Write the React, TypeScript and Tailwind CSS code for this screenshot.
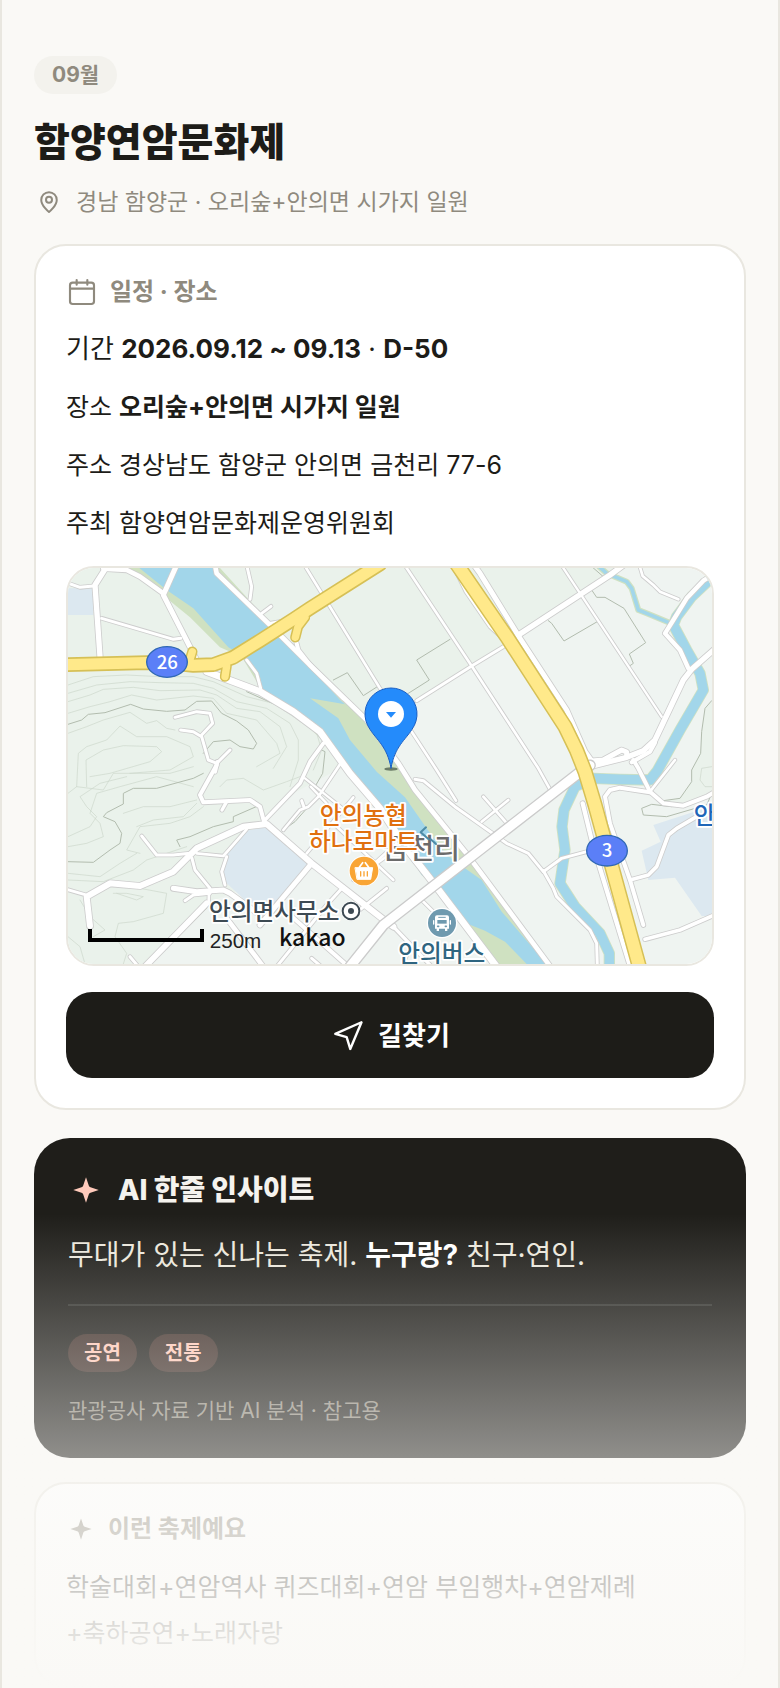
import React from "react";

type Road = [string, number];

const ROADS: Road[] = [
  ["140,20 105,75 120,290", 16],
  ["130,26 200,30 240,50 310,100", 14],
  ["350,15 310,105 392,265 410,300", 15],
  ["20,68 60,82 100,78", 9],
  ["125,175 340,238 362,235", 9],
  ["440,335 600,395 700,455 780,515 870,640 960,745 1035,860 1125,975 1310,1220", 20],
  ["465,15 470,40 630,195 760,325 920,480 1015,610 1065,690 1215,875 1275,955 1475,1225", 14],
  ["560,15 575,80 570,118", 9],
  ["605,160 633,139", 9],
  ["625,190 665,183", 7],
  ["706,235 715,270 750,315 850,415", 12],
  ["733,15 960,385 1055,515 1130,630 1188,722", 8],
  ["560,300 590,340 602,385", 9],
  ["1034,15 1235,318 1435,625 1470,688", 8],
  ["1504,15 1805,470", 7],
  ["1695,12 1650,45 1380,222", 16],
  ["1330,260 1235,318 1070,422", 9],
  ["1242,15 1260,40 1380,235 1520,450 1575,575 1595,603 1630,600 1685,570 1700,576 1700,588", 15],
  ["1185,28 1218,95 1290,200 1325,232", 9],
  ["1965,40 1930,62 1880,115 1840,180 1815,220 1860,270 1885,325", 13],
  ["1738,15 1748,48 1780,75 1800,95 1855,118", 8],
  ["1970,262 1895,328 1870,360 1785,540 1750,572 1700,592 1580,622", 16],
  ["1785,548 1770,575 1715,607", 12],
  ["1720,600 1735,625 1770,695 1810,730 1870,737 1940,710 1970,692", 12],
  ["1845,600 1770,695", 8],
  ["1750,1095 1710,960 1650,790 1635,710 1650,690 1680,683 1770,697", 12],
  ["1568,730 1600,860 1712,1225", 13],
  ["1710,960 1765,945 1790,920 1825,825 1850,805 1910,770", 11],
  ["1755,1138 1860,1110 1970,1062", 11],
  ["1580,875 1505,895 1450,935 1405,880 1340,850 1185,740 1090,662 1065,658", 9],
  ["1450,932 1480,985 1490,1010 1590,1110 1610,1150 1612,1220", 9],
  ["1270,710 1345,795", 8],
  ["1345,720 1265,785", 8],
  ["20,988 75,1004", 9],
  ["90,1098 80,1010 150,970 240,978 340,935 410,865 550,800 620,792 755,910 970,1078 1000,1100", 18],
  ["470,615 420,705 430,727 570,720 600,740 613,788", 12],
  ["345,472 410,455 450,460 458,490 425,525", 9],
  ["362,510 400,515 425,530 445,600 470,610 510,570", 9],
  ["472,606 465,635", 12],
  ["486,750 500,725", 10],
  ["615,780 720,670 750,605 790,550", 11],
  ["735,655 860,755", 7],
  ["842,610 775,710 745,740 720,750 670,810", 8],
  ["725,722 732,742", 9],
  ["752,680 800,730", 7],
  ["245,828 290,885 340,885 390,880", 9],
  ["396,895 405,930 450,985", 9],
  ["410,880 490,888 560,808", 8],
  ["500,890 485,935 495,975", 9],
  ["340,985 410,995 490,990 510,1000 600,1065", 15],
  ["447,995 446,1030", 8],
  ["375,1022 400,1005 450,1000", 9],
  ["440,1030 250,1225", 17],
  ["755,910 600,1095", 15],
  ["500,1075 610,1220", 14],
  ["650,1220 800,1035 850,980", 9],
  ["690,1065 865,1220", 12],
  ["880,1065 980,985", 9],
  ["880,712 740,880", 8],
  ["820,790 1000,960", 8],
  ["880,960 1035,850", 8],
  ["755,1195 790,1225", 9],
  ["210,1190 235,1220", 9],
  ["910,940 1010,850", 8],
  ["1000,1100 1115,1220", 10],
  ["1085,1020 1140,1075", 8],
  ["1030,1210 1045,1175", 8],
];

const CONTOURS = [
  "24,375 100,350 200,345 300,350 400,350 460,365 560,410 640,430 700,470 770,520 785,570 760,630",
  "24,400 110,375 210,365 300,368 400,370 460,385 530,425 620,445 690,490 715,540 715,600 690,680",
  "24,425 90,405 130,388 220,382 300,392 420,390 470,405 530,445 600,455 660,500 680,560 640,625",
  "24,460 90,440 150,425 215,405 290,420 400,408 460,415 500,460 590,480 650,550 660,580 590,620",
  "24,520 80,500 130,480 210,457 260,490 290,482 320,505 345,510",
  "50,680 55,580 80,560 140,540 180,498 230,530 320,530 390,560 400,590 330,630 210,640",
  "80,680 78,600 130,570 190,557 290,560 305,575 270,605 150,640 90,650",
  "24,700 50,680 130,690 160,640 240,640 330,640 400,620",
  "24,830 90,800 110,770 80,740 60,710 120,670 200,650",
  "24,860 80,850 130,830 120,790 90,760 110,700 180,680 290,650 400,680",
  "190,760 250,740 330,740 410,720",
  "230,800 280,780 370,770 410,730",
  "240,880 200,870 240,800 330,790 390,770 430,740",
  "24,940 120,950 180,910 230,880",
  "24,960 130,965 220,930 260,900 380,860",
  "100,1130 135,1110 90,1070 60,1020",
  "160,1000 200,1000 250,1010 230,1020 170,1000",
  "240,985 320,1000 310,1060 220,1085 175,1090 165,1130 200,1180 190,1212",
  "24,1130 60,1160 75,1212",
  "480,680 500,660 550,655 610,690 680,665 720,650",
  "1955,620 1925,625 1920,660 1935,680 1965,680",
];

const BORDERS = [
  "24,493 65,480 85,463 135,458 212,433 250,447 320,454 375,450 410,424 455,423 485,460 530,483 565,510 590,550 580,567 540,560 510,540 460,545 430,580",
  "24,905 100,907 150,870 180,850 185,820 165,785 130,770 140,758 190,732 190,700 220,685 290,685 400,655 430,640",
  "360,860 350,840 390,830 460,800 520,785 520,770 600,735",
  "820,360 862,338 910,407 955,378",
  "1045,400 1108,360 1070,300 1170,238",
  "1465,182 1475,190 1512,243 1610,186",
  "1595,90 1610,112 1635,112 1692,145 1757,248 1708,282 1720,310 1710,317",
  "1955,422 1935,445 1925,515 1922,580 1895,630 1895,665 1860,715 1810,722",
  "1600,24 1630,50",
  "785,570 795,575 788,640 765,680",
  "560,395 660,440 770,515",
  "1960,690 1940,735 1820,770 1750,765 1745,745 1775,733 1835,740",
  "745,740 705,785 670,810",
  "290,1195 440,1045",
];

const RIVER_EAST =
  "1950,58 1895,110 1850,170 1840,195 1880,270 1920,340 1930,390 1860,510 1792,632 1770,660 1680,658 1600,655 1545,680 1512,750 1506,800 1515,870 1500,970 1545,1040 1620,1120 1648,1180 1648,1240";
const BROOK = "1618,20 1640,40 1700,65 1715,85 1735,150 1760,160 1825,187";
const BRIDGE_ROAD = "1590,616 1555,640 970,1095 870,1220";
const ROUTE_26 =
  "10,314 260,308 330,309 400,316 460,314 520,292 600,242 700,178 750,145 960,12";
const ROUTE_3 = "1190,12 1340,230 1515,500 1550,572 1575,635 1605,735 1742,1235";
const SPURS = ["397,275 388,305", "495,350 500,318", "706,232 714,200 735,172"];

const LABEL = { fontFamily: '"Noto Sans CJK KR", sans-serif' };

function VenueMap() {
  return (
    <svg
      viewBox="24 24 1932 1188"
      preserveAspectRatio="xMidYMid slice"
      className="block h-auto w-full"
      role="img"
      aria-label="행사장 지도"
      fill="none"
      strokeLinejoin="round"
      strokeLinecap="round"
      style={LABEL}
    >
      <rect x="0" y="0" width="2000" height="1240" fill="#eff4f1" />
      <path d="M24 24H1680L1375 230 1050 440 900 480 700 455 780 515 850 620 700 700 615 790 740 910 440 1030 250 1212H24Z" fill="#eaf2eb" />
      <path d="M1956 422 1935 445 1925 515 1922 580 1895 630 1895 665 1860 715 1810 722 1870 737 1956 700Z" fill="#eaf2eb" />
      <path d="M24 85H100V165H24ZM560 812 620 800 745 910 640 1040 560 1025 500 970 485 930 500 880ZM1780 795 1965 735V1068L1925 1068 1845 953 1765 960 1745 872 1802 845Z" fill="#dce8f0" />
      <path d="M205 24H480L640 200 855 430 925 490 1035 655 1075 705 1205 870 1280 965 1470 1212H1300L1150 1010 1085 945 955 745 840 590 690 450 605 390 545 290 480 262 390 172 320 115Z" fill="#cfe1c1" />
      <path d="M238 24H462L600 165 665 235 760 330 840 420 900 470 855 433 750 415 835 475 870 540 950 635 1035 712 1105 812 1160 885 1215 925 1265 960 1325 1055 1460 1212H1375L1330 1165 1290 1135 1205 1090 1145 990 1085 945 970 765 865 615 800 525 700 455 605 385 600 350 555 290 505 262 400 145 320 90Z" fill="#a2d6ea" />
      <path d="M1200 1082 1275 1112 1335 1145 1400 1212H1305Z" fill="#cfe1c1" />
      {CONTOURS.map((p) => (
        <polyline key={p} points={p} stroke="#ccd6ca" strokeWidth="2" />
      ))}
      {BORDERS.map((p) => (
        <polyline key={p} points={p} stroke="#b2bcae" strokeWidth="3" />
      ))}
      <polyline points={RIVER_EAST} stroke="#cfe1c1" strokeWidth="34" />
      <polyline points={BROOK} stroke="#cfe1c1" strokeWidth="18" />
      <polyline points={RIVER_EAST} stroke="#a2d6ea" strokeWidth="29" />
      <polyline points={BROOK} stroke="#a2d6ea" strokeWidth="11" />
      {ROADS.map(([p, w]) => (
        <polyline key={p} points={p} stroke="#cdcdcd" strokeWidth={w + 5} />
      ))}
      {ROADS.map(([p, w]) => (
        <polyline key={p} points={p} stroke="#fff" strokeWidth={w} />
      ))}
      <polyline points={BRIDGE_ROAD} stroke="#cbcbcb" strokeWidth="35" />
      <polyline points={BRIDGE_ROAD} stroke="#fff" strokeWidth="27" />
      {SPURS.map((p) => (
        <polyline key={p} points={p} stroke="#d6c056" strokeWidth="31" />
      ))}
      <polyline points={ROUTE_26} stroke="#d6c056" strokeWidth="44" />
      <polyline points={ROUTE_3} stroke="#d6c056" strokeWidth="46" />
      {SPURS.map((p) => (
        <polyline key={p} points={p} stroke="#ffe98a" strokeWidth="22" />
      ))}
      <polyline points={ROUTE_26} stroke="#ffe98a" strokeWidth="34" />
      <polyline points={ROUTE_3} stroke="#ffe98a" strokeWidth="37" />

      <g fill="#5b7ff7" stroke="#3068b4" strokeWidth="4">
        <ellipse cx="321" cy="306" rx="61" ry="46" />
        <ellipse cx="1641" cy="872" rx="61" ry="46" />
      </g>
      <g fill="#fff" fontSize="56" fontWeight="500" textAnchor="middle">
        <text x="322" y="326">26</text>
        <text x="1641" y="892">3</text>
      </g>

      <g stroke="#fff" strokeWidth="11" paintOrder="stroke" fontWeight="500" fontSize="71">
        <text x="968" y="897" fontSize="84" fill="#6b6b6b">금천리</text>
        <path d="M1098 802 1082 817 1106 838M1112 838 1128 852" stroke="#4e8ba6" strokeWidth="6" />
        <text x="779" y="791" fill="#e0700f">안의농협</text>
        <text x="747" y="870" fill="#e0700f">하나로마트</text>
        <text x="447" y="1079" fill="#3d4a53">안의면사무소</text>
        <text x="1015" y="1206" fill="#2f6580">안의버스</text>
        <text x="1901" y="793" fill="#1e66b8">안의</text>
      </g>
      <circle cx="873" cy="1053" r="30" fill="#fff" />
      <circle cx="873" cy="1053" r="25" stroke="#3d4a53" strokeWidth="6" />
      <circle cx="873" cy="1053" r="9" fill="#3d4a53" />

      <circle cx="912" cy="933" r="46" fill="#fff" />
      <circle cx="912" cy="933" r="43" fill="#f9a535" />
      <path d="M886 923H938L932 958H892Z" fill="#fff" stroke="#fff" strokeWidth="3" />
      <path d="M898 922 908 908M926 922 916 908" stroke="#fff" strokeWidth="5" />
      <path d="M902 935V948M912 935V948M922 935V948" stroke="#f9a535" strokeWidth="4" />

      <circle cx="1146" cy="1089" r="46" fill="#fff" />
      <circle cx="1146" cy="1089" r="42" fill="#6f9aaf" />
      <path d="M1131 1066H1161Q1167 1066 1167 1072V1106H1162V1113H1155V1106H1137V1113H1130V1106H1125V1072Q1125 1066 1131 1066Z" fill="#fff" />
      <path d="M1136 1072H1156" stroke="#6f9aaf" strokeWidth="3" />
      <path d="M1132 1080H1160V1091H1132Z" fill="#6f9aaf" />
      <path d="M1133 1099H1136M1156 1099H1159" stroke="#6f9aaf" strokeWidth="5" />
      <path d="M1121 1082V1092M1171 1082V1092" stroke="#fff" strokeWidth="4" />

      <polyline points="90,1113 90,1140 426,1140 426,1113" stroke="#000" strokeWidth="12" strokeLinecap="square" strokeLinejoin="miter" />
      <text x="449" y="1164" fontSize="62" fill="#222" style={{ fontFamily: '"Liberation Sans", sans-serif' }}>250m</text>
      <text x="657" y="1157" fontSize="69" fontWeight="500" fill="#111">kakao</text>

      <ellipse cx="993" cy="627" rx="20" ry="5" fill="#4a5a48" opacity="0.75" />
      <path d="M993 624C982 560 950 540 930 508A78 78 0 1 1 1056 508C1036 540 1004 560 993 624Z" fill="#248bfb" stroke="#1a5fc4" strokeWidth="3" />
      <circle cx="993" cy="462" r="39" fill="#fff" />
      <path d="M978 456H1008L993 473Z" fill="#248bfb" />
    </svg>
  );
}

function PinIcon() {
  return (
    <svg viewBox="0 0 24 24" className="size-[30px] shrink-0" fill="none" stroke="currentColor" strokeWidth="1.6" strokeLinejoin="round" aria-hidden="true">
      <path d="M12 20s6.2-5 6.2-9.7a6.2 6.2 0 0 0-12.4 0C5.8 15 12 20 12 20Z" />
      <circle cx="12" cy="10.2" r="2.4" />
    </svg>
  );
}

function CalendarIcon() {
  return (
    <svg viewBox="0 0 24 24" className="size-8 shrink-0" fill="none" stroke="currentColor" strokeWidth="1.6" strokeLinecap="round" aria-hidden="true">
      <rect x="3" y="5" width="18" height="16" rx="2" />
      <path d="M3 9.5h18M8 3v3.5M16 3v3.5" />
    </svg>
  );
}

function RouteIcon() {
  return (
    <svg viewBox="0 0 24 24" className="size-9 shrink-0" fill="none" stroke="currentColor" strokeWidth="1.6" strokeLinejoin="round" aria-hidden="true">
      <path d="M21 3.5 3.5 11.2l7.6 2.2 2.4 7.9Z" />
    </svg>
  );
}

function Sparkle({ className }: { className: string }) {
  return (
    <svg viewBox="0 0 24 24" className={className} fill="currentColor" aria-hidden="true">
      <path d="M12 3.5 13.9 9.2Q14.2 10 15 10.2L20.5 12 15 13.8Q14.2 14 13.9 14.8L12 20.5 10.1 14.8Q9.8 14 9 13.8L3.5 12 9 10.2Q9.8 10 10.1 9.2Z" />
    </svg>
  );
}

const TAGS = ["공연", "전통"];

export default function App() {
  return (
    <main className="relative min-h-screen border-x-2 border-[#e9e7e0] bg-[#faf9f6] px-8 pt-14 font-['Inter','Noto_Sans_CJK_KR',sans-serif] break-keep text-[#1d1c18]">
      <header>
        <span className="inline-flex h-[38px] items-center rounded-full bg-[#f3f2ed] px-[18px] align-top text-[21px] font-bold text-[#8f8a7e]">
          09월
        </span>
        <h1 className="mt-5 text-[39px] leading-[56px] font-extrabold">함양연암문화제</h1>
        <p className="mt-4 flex items-center gap-3 text-[23px] leading-8 text-[#8f8a7e]">
          <PinIcon />
          경남 함양군 · 오리숲+안의면 시가지 일원
        </p>
      </header>

      <section className="mt-[26px] rounded-[32px] border-2 border-[#e9e7e0] bg-white p-[30px]">
        <h2 className="flex items-center gap-3 text-2xl leading-8 font-bold text-[#8f8a7e]">
          <CalendarIcon />
          일정 · 장소
        </h2>
        <div className="mt-[18px] flex flex-col gap-3 text-[25px] leading-[46px]">
          <p className="text-[26px]">기간 <strong className="font-bold">2026.09.12 ~ 09.13</strong> · <strong className="font-bold">D-50</strong></p>
          <p>장소 <strong className="font-bold">오리숲+안의면 시가지 일원</strong></p>
          <p>주소 경상남도 함양군 안의면 금천리 77-6</p>
          <p>주최 함양연암문화제운영위원회</p>
        </div>
        <div className="mt-5 overflow-hidden rounded-[28px] border-2 border-[#e9e7e0]">
          <VenueMap />
        </div>
        <button type="button" className="mt-[26px] flex h-[86px] w-full items-center justify-center gap-3 rounded-[26px] bg-[#1d1c18] text-[26px] font-bold text-white">
          <RouteIcon />
          길찾기
        </button>
      </section>

      <section className="mt-7 rounded-[36px] bg-[#1f1e1a] p-[34px]">
        <h2 className="flex items-center gap-3.5 text-[28px] leading-9 font-extrabold text-[#f5f3ee]">
          <Sparkle className="size-9 shrink-0 text-[#ffcabb]" />
          AI 한줄 인사이트
        </h2>
        <p className="mt-[22px] text-[28px] leading-[50px] text-[#ebe7dc]">
          무대가 있는 신나는 축제. <strong className="font-bold text-white">누구랑?</strong> 친구·연인.
        </p>
        <div className="mt-6 border-t-2 border-white/10 pt-7">
          <ul className="flex gap-3">
            {TAGS.map((tag) => (
              <li key={tag} className="flex h-[38px] items-center rounded-full bg-[#ff9b85]/15 px-4 text-[20px] font-bold text-[#ffc9b8]">
                {tag}
              </li>
            ))}
          </ul>
          <p className="mt-[26px] text-[21px] leading-[26px] text-[#8f8a7e]">관광공사 자료 기반 AI 분석 · 참고용</p>
        </div>
      </section>

      <section className="mt-6 rounded-[32px] border-2 border-[#e9e7e0] bg-white p-[30px]">
        <h2 className="flex items-center gap-3 text-2xl leading-7 font-bold text-[#8f8a7e]">
          <Sparkle className="size-[30px] shrink-0" />
          이런 축제예요
        </h2>
        <p className="mt-5 text-[25px] leading-[46px]">
          학술대회+연암역사 퀴즈대회+연암 부임행차+연암제례 +축하공연+노래자랑
        </p>
      </section>

      <div className="pointer-events-none absolute inset-x-0 bottom-0 h-[474px] bg-linear-to-b from-[#faf9f6]/0 to-[#faf9f6]" />
    </main>
  );
}
